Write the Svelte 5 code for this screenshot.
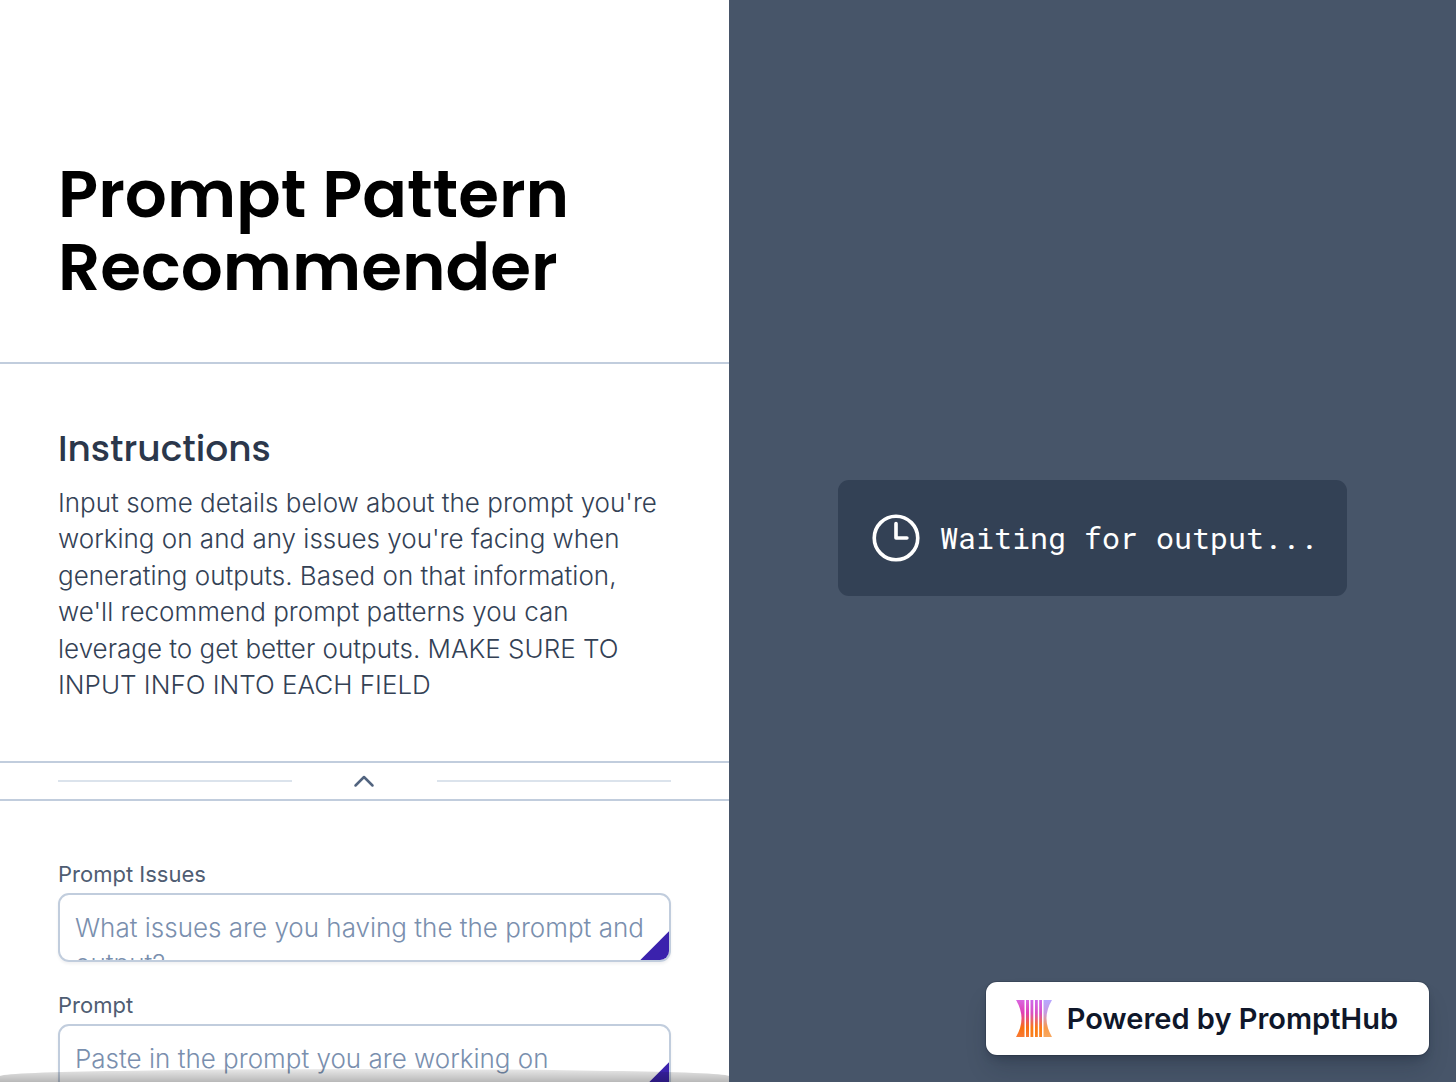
<script>
  let open = $state(true);
  const fields = [
    { id: 'issues', label: 'Prompt Issues', placeholder: 'What issues are you having the the prompt and output?' },
    { id: 'prompt', label: 'Prompt', placeholder: 'Paste in the prompt you are working on' }
  ];
</script>

<div class="page">
  <main class="form-pane">
    <header>
      <h1>Prompt Pattern Recommender</h1>
    </header>

    {#if open}
      <section class="instructions">
        <h2>Instructions</h2>
        <p>
          Input some details below about the prompt you're working on and any issues you're facing when
          generating outputs. Based on that information, we'll recommend prompt patterns you can leverage
          to get better outputs. MAKE SURE TO INPUT INFO INTO EACH FIELD
        </p>
      </section>
    {/if}

    <button class="toggle" type="button" aria-label="Toggle instructions" aria-expanded={open} onclick={() => (open = !open)}>
      <span class="rule"></span>
      <svg class="chevron" class:closed={!open} viewBox="0 0 22 14" aria-hidden="true">
        <path d="M2.500 11.500 11 3l8.500 8.500" />
      </svg>
      <span class="rule"></span>
    </button>

    <form>
      {#each fields as field (field.id)}
        <div class="field">
          <label for={field.id}>{field.label}</label>
          <div class="box">
            <textarea id={field.id} placeholder={field.placeholder}></textarea>
            <span class="grip"></span>
          </div>
        </div>
      {/each}
    </form>
    <div class="fade"></div>
  </main>

  <aside class="output-pane">
    <div class="waiting" role="status">
      <svg viewBox="0 0 24 24" aria-hidden="true">
        <path d="M12 6v6h4.5M21 12a9 9 0 1 1-18 0 9 9 0 0 1 18 0Z" />
      </svg>
      <span>Waiting for output...</span>
    </div>
    <a class="badge" href="#prompthub">
      <svg viewBox="0 0 36 37" aria-hidden="true">
        <defs>
          <linearGradient id="pink" x1="0" y1="0" x2="0" y2="1">
            <stop offset="0" stop-color="#d966e0" />
            <stop offset="0.35" stop-color="#e03fb4" />
            <stop offset="0.75" stop-color="#f9700f" />
            <stop offset="1" stop-color="#f97a35" />
          </linearGradient>
          <linearGradient id="violet" x1="0" y1="0" x2="0" y2="1">
            <stop offset="0" stop-color="#b8a8ff" />
            <stop offset="0.35" stop-color="#c69ae0" />
            <stop offset="0.75" stop-color="#f99a4a" />
            <stop offset="1" stop-color="#f8a860" />
          </linearGradient>
          <linearGradient id="mid" x1="0" y1="0" x2="0" y2="1">
            <stop offset="0" stop-color="#cf68ea" />
            <stop offset="0.35" stop-color="#d950c4" />
            <stop offset="0.75" stop-color="#fb7a12" />
            <stop offset="1" stop-color="#fa8120" />
          </linearGradient>
        </defs>
        <path fill="url(#pink)" d="M0 0H8.500V37H0Q11 18.500 0 0Z" />
        <path fill="url(#pink)" d="M10 0h3v37h-3z" />
        <path fill="url(#mid)" d="M14.500 0h2.800v37h-2.800zM19 0h2.800v37h-2.800zM23.200 0h2.800v37h-2.800z" />
        <path fill="url(#violet)" d="M27.500 0H36Q25 18.500 36 37H27.500Z" />
      </svg>
      <span>Powered by PromptHub</span>
    </a>
  </aside>
</div>

<style>
  :global(body) {
    margin: 0;
  }
  .page {
    display: grid;
    grid-template-columns: 729fr 727fr;
    height: 100vh;
    font-family: Inter, 'Liberation Sans', sans-serif;
    color: #334155;
    background: #fff;
  }
  .page * {
    box-sizing: border-box;
  }
  .form-pane {
    position: relative;
    overflow: hidden;
  }
  header {
    padding: 158px 58px 58px;
    border-bottom: 2px solid #c1cddd;
  }
  h1 {
    margin: 0;
    font: 600 66px/73px Poppins, Inter, sans-serif;
    color: #000;
  }
  .instructions {
    padding: 59px 58px 58px;
    border-bottom: 2px solid #c1cddd;
  }
  h2 {
    margin: 0 0 11px;
    font: 500 36px/51px Poppins, Inter, sans-serif;
    color: #2b374b;
  }
  p {
    margin: 0;
    font-size: 26px;
    font-weight: 300;
    line-height: 1.4;
  }
  .toggle {
    display: grid;
    grid-template-columns: 8fr 5fr 8fr;
    align-items: center;
    justify-items: center;
    width: 100%;
    height: 38px;
    padding: 0 58px;
    border: 0;
    border-bottom: 2px solid #c1cddd;
    background: none;
    cursor: pointer;
  }
  .rule {
    width: 100%;
    height: 2px;
    background: #dbe3ec;
  }
  .chevron {
    width: 22px;
    height: 14px;
    fill: none;
    stroke: #52647f;
    stroke-width: 2.5;
    stroke-linecap: round;
    stroke-linejoin: round;
  }
  .closed {
    transform: rotate(180deg);
  }
  form {
    display: grid;
    gap: 29px;
    padding: 59px 58px;
  }
  .field {
    display: grid;
    gap: 5px;
  }
  label {
    font-size: 22px;
    line-height: 28px;
    color: #4f5d73;
  }
  .box {
    position: relative;
    height: 69px;
    overflow: hidden;
    border: 2px solid #c1cddd;
    border-radius: 11px;
    box-shadow: 0 2px 3px rgb(15 23 42 / 6%);
  }
  textarea {
    display: block;
    width: 100%;
    height: 100%;
    padding: 15px;
    overflow: hidden;
    border: 0;
    outline: 0;
    resize: none;
    background: none;
    font: 300 26px/36px Inter, sans-serif;
    color: #334155;
  }
  textarea::placeholder {
    color: #7a8fae;
    opacity: 1;
  }
  .grip {
    position: absolute;
    right: 0;
    bottom: 0;
    width: 29px;
    height: 29px;
    background: #3b22ad;
    clip-path: polygon(100% 0, 100% 100%, 0 100%);
    pointer-events: none;
  }
  .fade {
    position: absolute;
    inset: auto 0 0;
    height: 13px;
    border-radius: 50% 50% 0 0 / 7px 7px 0 0;
    background: linear-gradient(rgb(0 0 0 / 9%), rgb(0 0 0 / 28%));
    pointer-events: none;
  }
  .output-pane {
    position: relative;
    display: grid;
    place-items: center;
    padding-bottom: 7px;
    background: #475569;
  }
  .waiting {
    display: flex;
    align-items: center;
    gap: 15px;
    padding: 29px;
    border-radius: 11px;
    background: #334155;
    color: #fff;
    font: 400 30px/40px 'Roboto Mono', 'Liberation Mono', monospace;
  }
  .waiting svg {
    width: 58px;
    height: 58px;
    fill: none;
    stroke: currentColor;
    stroke-width: 1.5;
    stroke-linecap: round;
    stroke-linejoin: round;
  }
  .badge {
    position: absolute;
    right: 27px;
    bottom: 27px;
    display: flex;
    align-items: center;
    gap: 15px;
    padding: 18px 31px 18px 30px;
    border-radius: 11px;
    background: #fff;
    box-shadow: 0 0 0 1px rgb(15 23 42 / 20%), 0 16px 24px -4px rgb(15 23 42 / 20%), 0 5px 8px -3px rgb(15 23 42 / 30%);
    color: #0f172a;
    font-size: 29px;
    font-weight: 600;
    line-height: 37px;
    text-decoration: none;
  }
  .badge svg {
    width: 36px;
    height: 37px;
  }
</style>
